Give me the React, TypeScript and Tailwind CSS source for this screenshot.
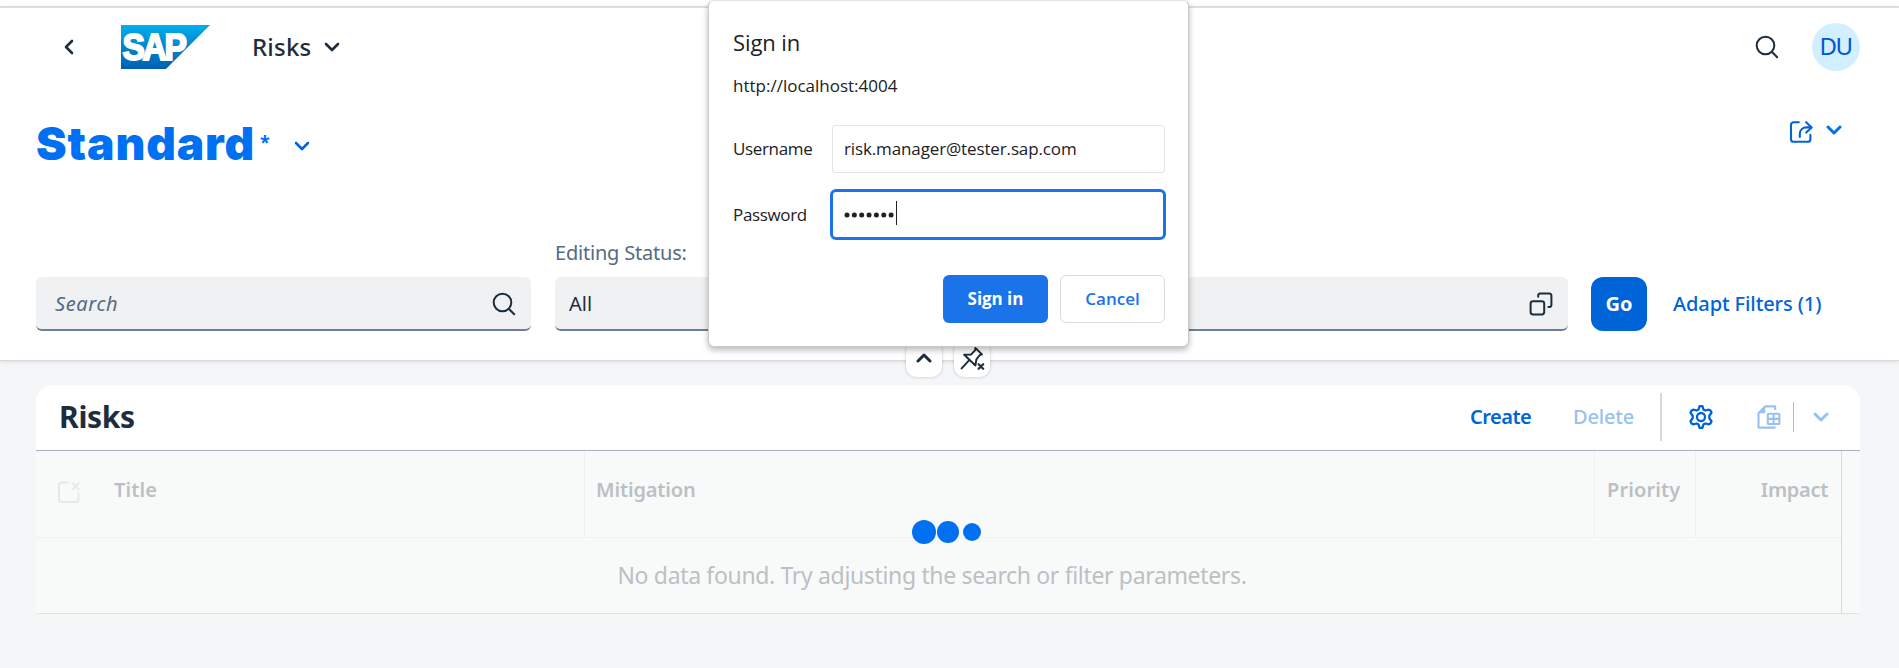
import type { ReactNode } from "react";

type IconProps = { className?: string };

function Chevron({ className = "", w = 2.6 }: IconProps & { w?: number }) {
  return (
    <svg viewBox="0 0 16 10" width="16" height="10" fill="none" stroke="currentColor" strokeWidth={w} strokeLinecap="round" strokeLinejoin="round" className={className}>
      <path d="M2 2l6 6 6-6" />
    </svg>
  );
}

function SearchIcon({ className = "" }: IconProps) {
  return (
    <svg viewBox="0 0 24 24" width="24" height="24" fill="none" stroke="currentColor" strokeWidth="2" strokeLinecap="round" className={className}>
      <circle cx="10.5" cy="10.5" r="8.8" />
      <path d="M17 17l5.2 5.2" />
    </svg>
  );
}

function ShareIcon({ className = "" }: IconProps) {
  return (
    <svg viewBox="0 0 24 24" width="24" height="24" fill="none" stroke="currentColor" strokeWidth="2.1" strokeLinecap="round" strokeLinejoin="round" className={className}>
      <path d="M9.8 2.2H4.6a2.6 2.6 0 0 0-2.6 2.6v14.4a2.6 2.6 0 0 0 2.6 2.6h14.2a2.6 2.6 0 0 0 2.6-2.6v-4.4" />
      <path d="M17.2 2.2L22.6 7.4l-5.4 5.2" />
      <path d="M22 7.4h-4.4c-4 0-6.8 2.6-6.8 6.6v3" />
    </svg>
  );
}

function ValueHelpIcon({ className = "" }: IconProps) {
  return (
    <svg viewBox="0 0 24 24" width="24" height="24" fill="none" stroke="currentColor" strokeWidth="2" strokeLinecap="round" className={className}>
      <rect x="1.6" y="9.2" width="13.6" height="13.2" rx="2.4" />
      <path d="M9.2 4.8V3.4a2 2 0 0 1 2-2h9a2.2 2.2 0 0 1 2.2 2.2v9.4a2 2 0 0 1-2 2h-1" />
    </svg>
  );
}

function GearIcon({ className = "" }: IconProps) {
  return (
    <svg viewBox="0 0 24 24" width="24" height="24" fill="none" stroke="currentColor" strokeWidth="2.3" strokeLinejoin="round" className={className}>
      <circle cx="12" cy="12" r="4" />
      <path d="M10.6 1.1h2.8l1 3.3 1.9 1.1 3.5-.8 1.7.9 1 2.2-2.2 2.9v2.6l2.2 2.9-1 2.2-1.7.9-3.5-.8-1.9 1.1-1 3.3h-2.8l-1-3.3-1.9-1.1-3.5.8-1.7-.9-1-2.2 2.2-2.9v-2.6L1.5 7.8l1-2.2 1.7-.9 3.5.8 1.9-1.1z" />
    </svg>
  );
}

function ExportIcon({ className = "" }: IconProps) {
  return (
    <svg viewBox="0 0 24 24" width="24" height="24" fill="none" stroke="currentColor" strokeWidth="2.1" strokeLinejoin="round" className={className}>
      <path d="M18.2 5V1.4H8.2L1.5 8.2v14.4h17" />
      <path d="M8.2 1.4v6.8H1.5z" fill="currentColor" stroke="none" />
      <rect x="10.8" y="8.8" width="11.6" height="10.2" rx="0.8" />
      <path d="M16.6 8.8V19M10.8 13.9h11.6" />
    </svg>
  );
}

function DeselectIcon({ className = "" }: IconProps) {
  return (
    <svg viewBox="0 0 24 24" width="24" height="24" fill="none" stroke="currentColor" strokeWidth="2" strokeLinecap="round" strokeLinejoin="round" className={className}>
      <path d="M10.8 2.6H4.6A2.6 2.6 0 0 0 2 5.2v14.2A2.6 2.6 0 0 0 4.6 22h14.2a2.6 2.6 0 0 0 2.6-2.6v-6" />
      <path d="M15.6 3.2l6 6M21.6 3.2l-6 6" />
    </svg>
  );
}

function UnpinIcon({ className = "" }: IconProps) {
  return (
    <svg viewBox="0 0 26 26" width="26" height="26" fill="none" stroke="currentColor" strokeWidth="2" strokeLinecap="round" strokeLinejoin="round" className={className}>
      <path d="M15.4 2l6.6 6.4-2.2.6-3.4 4.400-1 6L4.2 8.800l7-.4 3.8-4z" />
      <path d="M8.8 14.6L1.6 22.4" />
      <path d="M18.6 18.2l4.6 4.6M23.2 18.2l-4.6 4.6" strokeWidth="2.2" />
    </svg>
  );
}

function SapLogo() {
  return (
    <svg viewBox="0 0 89 44" width="89" height="44" className="ml-[44px] shrink-0">
      <defs>
        <linearGradient id="sap" x1="0" y1="0" x2="0" y2="1">
          <stop offset="0" stopColor="#00aeef" />
          <stop offset="0.45" stopColor="#0089d0" />
          <stop offset="1" stopColor="#0060b0" />
        </linearGradient>
      </defs>
      <path d="M0 0h89L45 44H0z" fill="url(#sap)" />
      <text x="1.5" y="35" fill="#fff" stroke="#fff" strokeWidth="2" letterSpacing="-2.5" fontFamily="Liberation Sans, sans-serif" fontWeight="700" fontSize="36" textLength="62" lengthAdjust="spacingAndGlyphs">
        SAP
      </text>
    </svg>
  );
}

function Field({ children, className = "" }: { children?: ReactNode; className?: string }) {
  return (
    <div className={`flex h-[54px] items-center justify-between rounded-md border-b-2 border-[#6b8094] bg-[#eff1f2] pt-0.5 ${className}`}>
      {children}
    </div>
  );
}

function Header() {
  return (
    <header className="flex h-[78px] items-center justify-between pr-[39px]">
      <div className="flex items-center">
        <Chevron className="ml-[61px] rotate-90" />
        <SapLogo />
        <span className="ml-[42px] pb-px text-[24px] font-medium tracking-[0.2px]">Risks</span>
        <Chevron className="ml-[13px]" />
      </div>
      <div className="flex items-center">
        <SearchIcon className="mr-[33px]" />
        <div className="flex size-12 items-center justify-center rounded-full bg-[#d1efff] pr-px pb-0.5 text-[24px] tracking-[-1.5px] text-[#0057d2]">DU</div>
      </div>
    </header>
  );
}

function FilterBar() {
  return (
    <div className="flex items-end pl-9">
      <Field className="w-[495px] pr-[15px] pl-[19px]">
        <span className="text-[20px] tracking-[0.6px] text-[#556b82] italic">Search</span>
        <SearchIcon />
      </Field>
      <div className="ml-6">
        <div className="h-[39px] text-[20px] leading-[30px] tracking-[-0.2px] text-[#556b82]">Editing Status:</div>
        <Field className="w-[495px] pl-[14px]">
          <span className="text-[20px]">All</span>
        </Field>
      </div>
      <Field className="ml-6 w-[494px] pr-[15px]">
        <span />
        <ValueHelpIcon />
      </Field>
      <button className="ml-[23px] h-[54px] w-14 rounded-xl bg-[#0064d9] text-[20px] font-bold text-white">Go</button>
      <button className="ml-[26px] h-[54px] text-[20px] font-medium tracking-[-0.1px] text-[#0064d9]">Adapt Filters (1)</button>
    </div>
  );
}

function Toolbar() {
  return (
    <div className="flex h-[66px] items-center border-b border-[#a8b3c0] bg-white pr-[31px] pb-0.5 pl-[23px] text-[20px] font-semibold tracking-[-0.5px]">
      <h2 className="mr-auto text-[30px] font-bold tracking-[-0.3px]">Risks</h2>
      <button className="w-[103px] text-left text-[#0064d9]">Create</button>
      <button className="w-[87px] text-left font-medium tracking-[-0.2px] text-[#99c1f0]">Delete</button>
      <div className="h-12 w-0.5 bg-[#d9d9d9]" />
      <GearIcon className="ml-[27px] text-[#0064d9]" />
      <ExportIcon className="ml-[44px] text-[#99c1f0]" />
      <div className="ml-3 h-[30px] w-px bg-[#99c1f0]" />
      <Chevron className="ml-[19px] text-[#99c1f0]" w={3} />
    </div>
  );
}

function Table() {
  return (
    <div className="flex h-[163px] border-b border-[#e0e3e4] bg-[#f8faf9] text-[#bbc0c5]">
      <div className="flex w-[1806px] flex-col border-r border-[#d7dadc]">
        <div className="flex h-[87px] shrink-0 border-b border-[#f0f2f2] text-[20px] leading-[77px] font-semibold tracking-[-0.15px]">
          <div className="flex w-[549px] items-center border-r border-[#f0f2f2]">
            <DeselectIcon className="mb-[5px] ml-[21px] text-[#e6e8e8]" />
            <span className="ml-[33px] self-start tracking-[0.1px]">Title</span>
          </div>
          <div className="w-[1010px] border-r border-[#f0f2f2] pl-[11px]">Mitigation</div>
          <div className="w-[101px] border-r border-[#f0f2f2] pl-[12px] tracking-[0.1px]">Priority</div>
          <div className="flex-1 pr-[13px] text-right tracking-[-0.3px]">Impact</div>
        </div>
        <div className="h-[75px] pr-[13px] text-center text-[23px] leading-[75px] tracking-[-0.34px]">
          No data found. Try adjusting the search or filter parameters.
        </div>
      </div>
    </div>
  );
}

function SignInDialog() {
  return (
    <div className="absolute top-0 left-[708px] z-20 h-[347px] w-[481px] rounded-md border border-[#c9c9c9] border-t-[#e2e2e2] bg-white pt-[23px] pr-[23px] pl-6 font-['Open_Sans',sans-serif] text-[17px] text-[#202124] shadow-[0_3px_6px_rgba(0,0,0,0.28)]">
      <div className="h-9 text-[22px] leading-9 tracking-[-0.1px]">Sign in</div>
      <div className="mt-[12px] h-7 leading-7">http://localhost:4004</div>
      <div className="mt-[25px] flex h-12 items-center">
        <label className="w-[99px] tracking-[-0.35px]">Username</label>
        <div className="flex h-12 flex-1 items-center rounded-[3px] border border-[#e4e4e4] pl-[11px] tracking-[-0.13px]">risk.manager@tester.sap.com</div>
      </div>
      <div className="mt-[15px] flex h-[52px] items-center">
        <label className="w-[97px] pt-0.5 tracking-[-0.35px]">Password</label>
        <div className="-mr-px flex h-[51px] flex-1 items-center rounded-md border-[3px] border-[#1a73e8] pl-[11px]">
          <svg viewBox="0 0 54 24" width="54" height="24" className="mb-0.5" fill="currentColor">
            {[0, 1, 2, 3, 4, 5, 6].map((n) => (
              <circle key={n} cx={3 + n * 7.35} cy="14" r="2.5" />
            ))}
            <path d="M52 0h1v24h-1z" />
          </svg>
        </div>
      </div>
      <div className="mt-[35px] flex justify-end gap-3 font-semibold">
        <button className="h-12 w-[105px] rounded-md bg-[#1a73e8] pb-px font-bold tracking-[-0.05px] text-white">Sign in</button>
        <button className="h-12 w-[105px] rounded-md border border-[#dadce0] pb-px text-[#1a73e8]">Cancel</button>
      </div>
    </div>
  );
}

export default function App() {
  return (
    <div className="relative h-[668px] w-[1899px] overflow-hidden bg-[#f5f6f8] font-['Noto_Sans',sans-serif] text-[#1d2d3e]">
      <div className="h-1.5 bg-white" />
      <div className="h-[355px] border-t-2 border-b border-t-[#dddddd] border-b-[#d9dadc] bg-white shadow-[0_1px_4px_rgba(34,53,72,0.12)]">
        <Header />
        <div className="flex h-[151px] items-start justify-between pt-[20px] pr-[57px] pl-9">
          <div className="flex h-[72px] items-center">
            <h1 className="pt-0.5 font-[Inter,sans-serif] text-[46px] leading-[72px] font-black tracking-[0.9px] text-[#0070f2]">Standard</h1>
            <span className="ml-[5px] text-[18px] leading-[60px] font-bold text-[#0070f2]">*</span>
            <Chevron className="mt-[8px] ml-[24px] text-[#0064d9]" />
          </div>
          <div className="flex h-[52px] items-center text-[#0064d9]">
            <ShareIcon />
            <Chevron w={3} className="mb-[4px] ml-[13px] text-[#0070f2]" />
          </div>
        </div>
        <div className="flex h-[94px] items-end">
          <FilterBar />
        </div>
      </div>
      <main className="mt-6 ml-9 w-[1824px] overflow-hidden rounded-t-2xl">
        <Toolbar />
        <Table />
      </main>
      <div className="absolute top-[341px] left-[906px] z-10 flex gap-3">
        <button className="flex size-9 items-center justify-center rounded-[10px] bg-white shadow-[0_0_3px_rgba(34,53,72,0.3)]">
          <Chevron className="mb-0.5 rotate-180" w={3} />
        </button>
        <button className="flex size-9 items-center justify-center rounded-[10px] bg-white pl-px shadow-[0_0_3px_rgba(34,53,72,0.3)]">
          <UnpinIcon />
        </button>
      </div>
      <div className="absolute top-[520px] left-[912px] flex h-6 items-center">
        <span className="size-6 rounded-full bg-[#0070f2]" />
        <span className="ml-px size-[22px] rounded-full bg-[#0070f2]" />
        <span className="ml-1 size-[18px] rounded-full bg-[#0070f2]" />
      </div>
      <SignInDialog />
    </div>
  );
}
